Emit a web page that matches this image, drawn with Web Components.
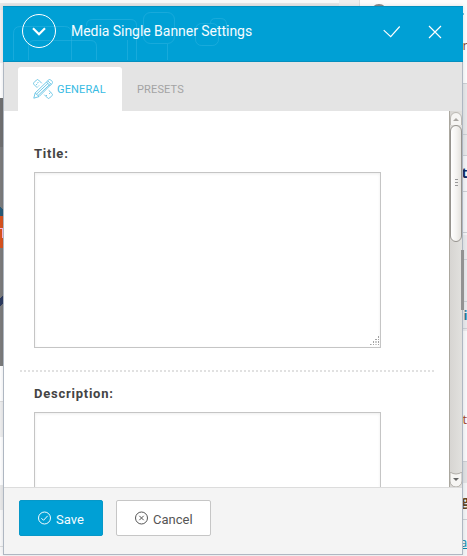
<!DOCTYPE html>
<html lang="en"><head><meta charset="utf-8"><title>Media Single Banner Settings</title>
<style>html,body{margin:0;width:467px;height:556px;overflow:hidden;background:#fafafa}body{font-family:Roboto,sans-serif}</style></head>
<body><settings-page></settings-page>
<script>
const define=(name,html)=>customElements.define(name,class extends HTMLElement{
 constructor(){super();const t=document.createElement('template');t.innerHTML=html;
 this.attachShadow({mode:'open'}).append(t.content.cloneNode(true));}
});

define('page-backdrop',`<style>:host{display:block;width:467px;height:556px}svg{display:block}text{font-family:"Open Sans",sans-serif}</style>
<svg width="467" height="556" shape-rendering="crispEdges">
<rect width="467" height="556" fill="#fafafa"/>
<rect width="339" height="3" fill="#f8f8f8"/><rect y="3" width="359" height="60" fill="#e7e7e7"/><rect x="339" width="20" height="6" fill="#eee"/>
<rect x="359" width="1" height="8" fill="#ddd"/><rect x="360" width="107" height="84" fill="#fcfcfc"/>
<circle cx="379" cy="12" r="8" fill="#888" shape-rendering="auto"/>
<rect y="10" width="3" height="53" fill="#f1f1f1"/><rect y="63" width="3" height="35" fill="#fff"/>
<rect y="98" width="3" height="268" fill="#7c7c7c"/><rect y="98" width="3" height="49" fill="#707070"/><rect y="366" width="3" height="35" fill="#fff"/>
<path d="M0 207l3 3v6H0z" fill="#285b77"/><rect y="216" width="3" height="32" fill="#d9531e"/><path d="M0 228.500h3M2.500 228v9h1" stroke="#fbd" fill="none"/><path d="M3 295v9l-3 2v-7z" fill="#2c3a5e"/>
<rect y="401" width="3" height="36" fill="#efefef"/><rect y="401" width="3" height="1" fill="#ddd"/><rect y="437" width="3" height="48" fill="#fff"/><rect y="485" width="3" height="25" fill="#eaeaea"/><rect y="546" width="3" height="1" fill="#ddd"/>
<rect x="463" y="83" width="4" height="72" fill="#e7e8e9"/><rect x="463" y="155" width="4" height="80" fill="#f4f5f7"/><rect x="463" y="235" width="4" height="96" fill="#e9eaec"/><rect x="463" y="331" width="4" height="130" fill="#f9f9fa"/><rect x="463" y="461" width="4" height="22" fill="#e1e2e3"/><rect x="463" y="483" width="4" height="73" fill="#f4f5f6"/>
<g fill="#ccd0d4"><rect x="463" y="83" width="4" height="1"/><rect x="463" y="134" width="4" height="1"/><rect x="463" y="155" width="4" height="1"/><rect x="463" y="191" width="4" height="1"/><rect x="463" y="232" width="4" height="1"/><rect x="463" y="259" width="4" height="1"/><rect x="463" y="301" width="4" height="1"/><rect x="463" y="328" width="4" height="1"/><rect x="463" y="461" width="4" height="1"/><rect x="463" y="519" width="4" height="1"/></g>
<text x="462.500" y="50" font-size="13" fill="#884b3b">n</text><text x="461.500" y="178" font-size="14" font-weight="700" fill="#102b5d">t</text><text x="463.500" y="320" font-size="13" font-weight="700" fill="#277a9a">i</text><text x="462.500" y="424" font-size="13" fill="#a64a2a">t</text><text x="461.500" y="506" font-size="14" font-weight="700" fill="#654620">g</text><text x="460" y="547" font-size="13" fill="#0788aa">a</text><rect x="463" y="548" width="4" height="1" fill="#0788aa"/>
<rect x="463" y="13" width="1" height="2" fill="#75bfd8"/>
</svg>`);

define('dialog-header',`<style>
:host{display:flex;align-items:center;height:56px;box-sizing:border-box;padding:0 21px 6px 19px;background:#00a0d5;border-top:1px solid #0090c0;border-bottom:1px solid #058fbe;position:relative;color:#f5fcff}
.pattern{position:absolute;left:0;top:-1px}.ring,.check,.close{position:relative;display:block;flex:none}.check{margin:2px 27px 0 0}.close{margin-top:2px}
h1{position:relative;flex:1;margin:0 0 0 14px;font:400 14px/20px Roboto,sans-serif;letter-spacing:-.04px;white-space:nowrap}
</style><svg class="pattern" width="250" height="54" fill="none" stroke="#36b5e2" stroke-opacity=".45"><path d="M10.500 54V27.500q0-7 7-7H61.500q7 0 7 7V54M25.500 54V40.500q0-6 6-6H87.500q6 0 6 6V54M83.500 20V19.500q0-6 6-6H127.500q6 0 6 6V54M124.500 54V34M164.500 38V54"/><rect x="140.500" y="6.500" width="31" height="31" rx="7"/><rect x="192.500" y="17.500" width="23" height="22" rx="6"/><path d="M207.500 17q0-4.500 5-4.500h5q6 0 6 6v5q0 5-5 5h-3"/></svg>
<svg class="ring" width="35" height="36" viewBox="0 0 35 36" fill="none" stroke="#fff"><circle cx="17" cy="18" r="16.500"/><path d="M11 15.300l6 6 6-6" stroke-width="2.100"/></svg>
<h1><slot></slot></h1>
<svg class="check" width="18" height="14" viewBox="0 0 18 14" fill="none" stroke="#fff" stroke-width="1.150"><path d="M.7 5.200l7 6.500L16.700 1.500"/></svg>
<svg class="close" width="14" height="14" viewBox="0 0 14 14" fill="none" stroke="#fff" stroke-width="1.150"><path d="M1 1l12 12M13 1L1 13"/></svg>`);

define('tab-item',`<style>:host{display:flex;align-items:center;box-sizing:border-box;height:44px;padding:0 15px;font:11px/16px Roboto,sans-serif;color:#a3a3a3;border-radius:3px 3px 0 0;white-space:nowrap}:host([active]){background:#fff;color:#38bbe3;width:104px}svg{display:none;flex:none;margin-right:4px;margin-top:-1px}:host([active]) svg{display:block}span{padding-top:2px;letter-spacing:.14px}</style>
<svg width="20" height="20" viewBox="0 0 20 20" fill="none" stroke="#58bee2" stroke-width=".85"><path d="M1 3.500L3.500 1q1-1 2 0l3.300 3.300M4.300 8.800L1 5.500q-1-1 0-2M11.300 15.700l3.300 3.300q1 1 2 0l2.400-2.400q1-1 0-2l-3.300-3.300M3 6l1.400-1.300M5.500 3l-1 1M13 17l1-1M16 15l1.400-1.300M5 7.500l1-1"/><path d="M.8 19.200l1.400-5.300L15.700.9q1-.9 2 0l1.500 1.600q.8.900 0 1.800L6 17.600zM2.200 13.900l3.800 3.700M13.500 3l3.700 3.800M14.700 1.800l3.700 3.700M3.500 15.200L15 4.300M5 16.500L16.500 5.700"/></svg><span><slot></slot></span>`);

define('tab-bar',`<style>:host{display:flex;align-items:flex-end;height:49px;padding:0 14px;box-sizing:border-box;background:#e4e4e4}</style><slot></slot>`);

define('field-area',`<style>:host{display:block}label{display:block;margin-left:15px;height:26px;font:700 13px/16px Roboto,sans-serif;letter-spacing:.76px;color:#444}
.box{display:flex;justify-content:flex-end;align-items:flex-end;margin-left:15px;box-sizing:border-box;width:347px;height:176px;border:1px solid #c5c5c5;background:#fff;box-shadow:inset 0 1px 3px #00000012}
svg{display:block}</style><label><slot></slot></label><div class="box"><svg width="11" height="12" fill="#a4a4a4"><path d="M9 1h1v2H9zM6 4h2v1H6zM9 4h1v1H9zM4 6h1v2H4zM9 6h1v2H9zM1 9h1v1H1zM4 9h1v1H4zM9 9h1v1H9z"/><path fill="#ccc" d="M6 6h2v2H6zM2 9h1v1H2zM6 9h2v1H6z"/></svg></div>`);

define('scroll-track',`<style>:host{display:flex;flex-direction:column;width:13px;height:376px;box-sizing:border-box;background:linear-gradient(90deg,#d7d5d2,#e2e1de);border-left:1px solid #aaa79f}svg{display:block}.thumb{display:flex;flex-direction:column;align-items:center;justify-content:center;gap:2px;width:12px;height:117px;box-sizing:border-box;border:1px solid #96938e;border-radius:6px;background:linear-gradient(90deg,#fff,#f5f4f2 50%,#e5e3df);padding-bottom:3px}.thumb i{width:3px;height:1px;background:#999}.fill{flex:1}</style>
<svg width="12" height="14"><path d="M.5 14V7a5.500 5.500 0 0 1 11 0v7" fill="#f6f5f3" stroke="#bbb8b3"/><path d="M3 10l3-3 3 3z" fill="#aaa7a3"/></svg><div class="thumb"><i></i><i></i><i></i></div><div class="fill"></div><svg width="12" height="15"><path d="M0 0v9a5.500 5.500 0 0 0 12 0V0q-6 4-12 0" fill="#f6f5f3" stroke="#b0ada8"/><path d="M3 6l3 3 3-3z" fill="#666"/></svg>`);

define('form-pane',`<style>:host{display:grid;grid-template-columns:1fr 13px;height:376px;overflow:hidden;background:#fff}.content{height:376px;overflow:hidden;box-sizing:border-box;padding:35px 14px 0 15px}.sep{height:2px;margin:22px 0 14px 1px;background:repeating-linear-gradient(90deg,#e1e1e1 0 2px,transparent 2px 4px)}</style>
<div class="content"><field-area>Title:</field-area><div class="sep"></div><field-area>Description:</field-area></div><scroll-track></scroll-track>`);

define('action-button',`<style>:host{display:flex;align-items:center;box-sizing:border-box;height:36px;width:95px;border:1px solid #c6c6c6;border-radius:2px;background:#fff;color:#555;padding:2px 0 0 18px;font:400 13px/18px Roboto,sans-serif}:host([primary]){width:84px;background:#00a0d5;border-color:#0698c8;color:#f4fcff}svg{flex:none;margin-right:5px;margin-top:-2px}.ok{display:none}:host([primary]) .ok{display:block}:host([primary]) .no{display:none}span{padding-top:2px}</style>
<svg width="13" height="14" viewBox="0 0 13 14" fill="none" stroke="currentColor"><circle cx="6.500" cy="7" r="6"/><path class="ok" d="M3.400 7.200l2.100 2.100 4.200-4.500"/><path class="no" d="M4.300 4.800l4.400 4.400M8.700 4.800L4.300 9.200"/></svg><span><slot></slot></span>`);

define('dialog-footer',`<style>:host{display:flex;gap:13px;align-items:flex-start;height:67px;box-sizing:border-box;padding:12px 15px;border-top:1px solid #dcdcdc;background:#f4f4f4}</style><slot></slot>`);

define('settings-dialog',`<style>:host{display:flex;flex-direction:column;width:460px;height:549px;box-sizing:border-box;border:1px solid #afb7c2;border-top:0;box-shadow:0 0 4px #26354126;background:#fff}dialog-header{margin:0 -1px}.pagebar{position:absolute;left:457px;top:244px;width:3px;height:60px;background:#929292}</style>
<dialog-header>Media Single Banner Settings</dialog-header><tab-bar><tab-item active>GENERAL</tab-item><tab-item>PRESETS</tab-item></tab-bar><form-pane></form-pane><dialog-footer><action-button primary>Save</action-button><action-button>Cancel</action-button></dialog-footer><div class="pagebar"></div>`);

define('settings-page',`<style>:host{display:block;position:relative;width:467px;height:556px;overflow:hidden}settings-dialog{position:absolute;left:3px;top:6px}</style><page-backdrop></page-backdrop><settings-dialog></settings-dialog>`);
</script></body></html>
